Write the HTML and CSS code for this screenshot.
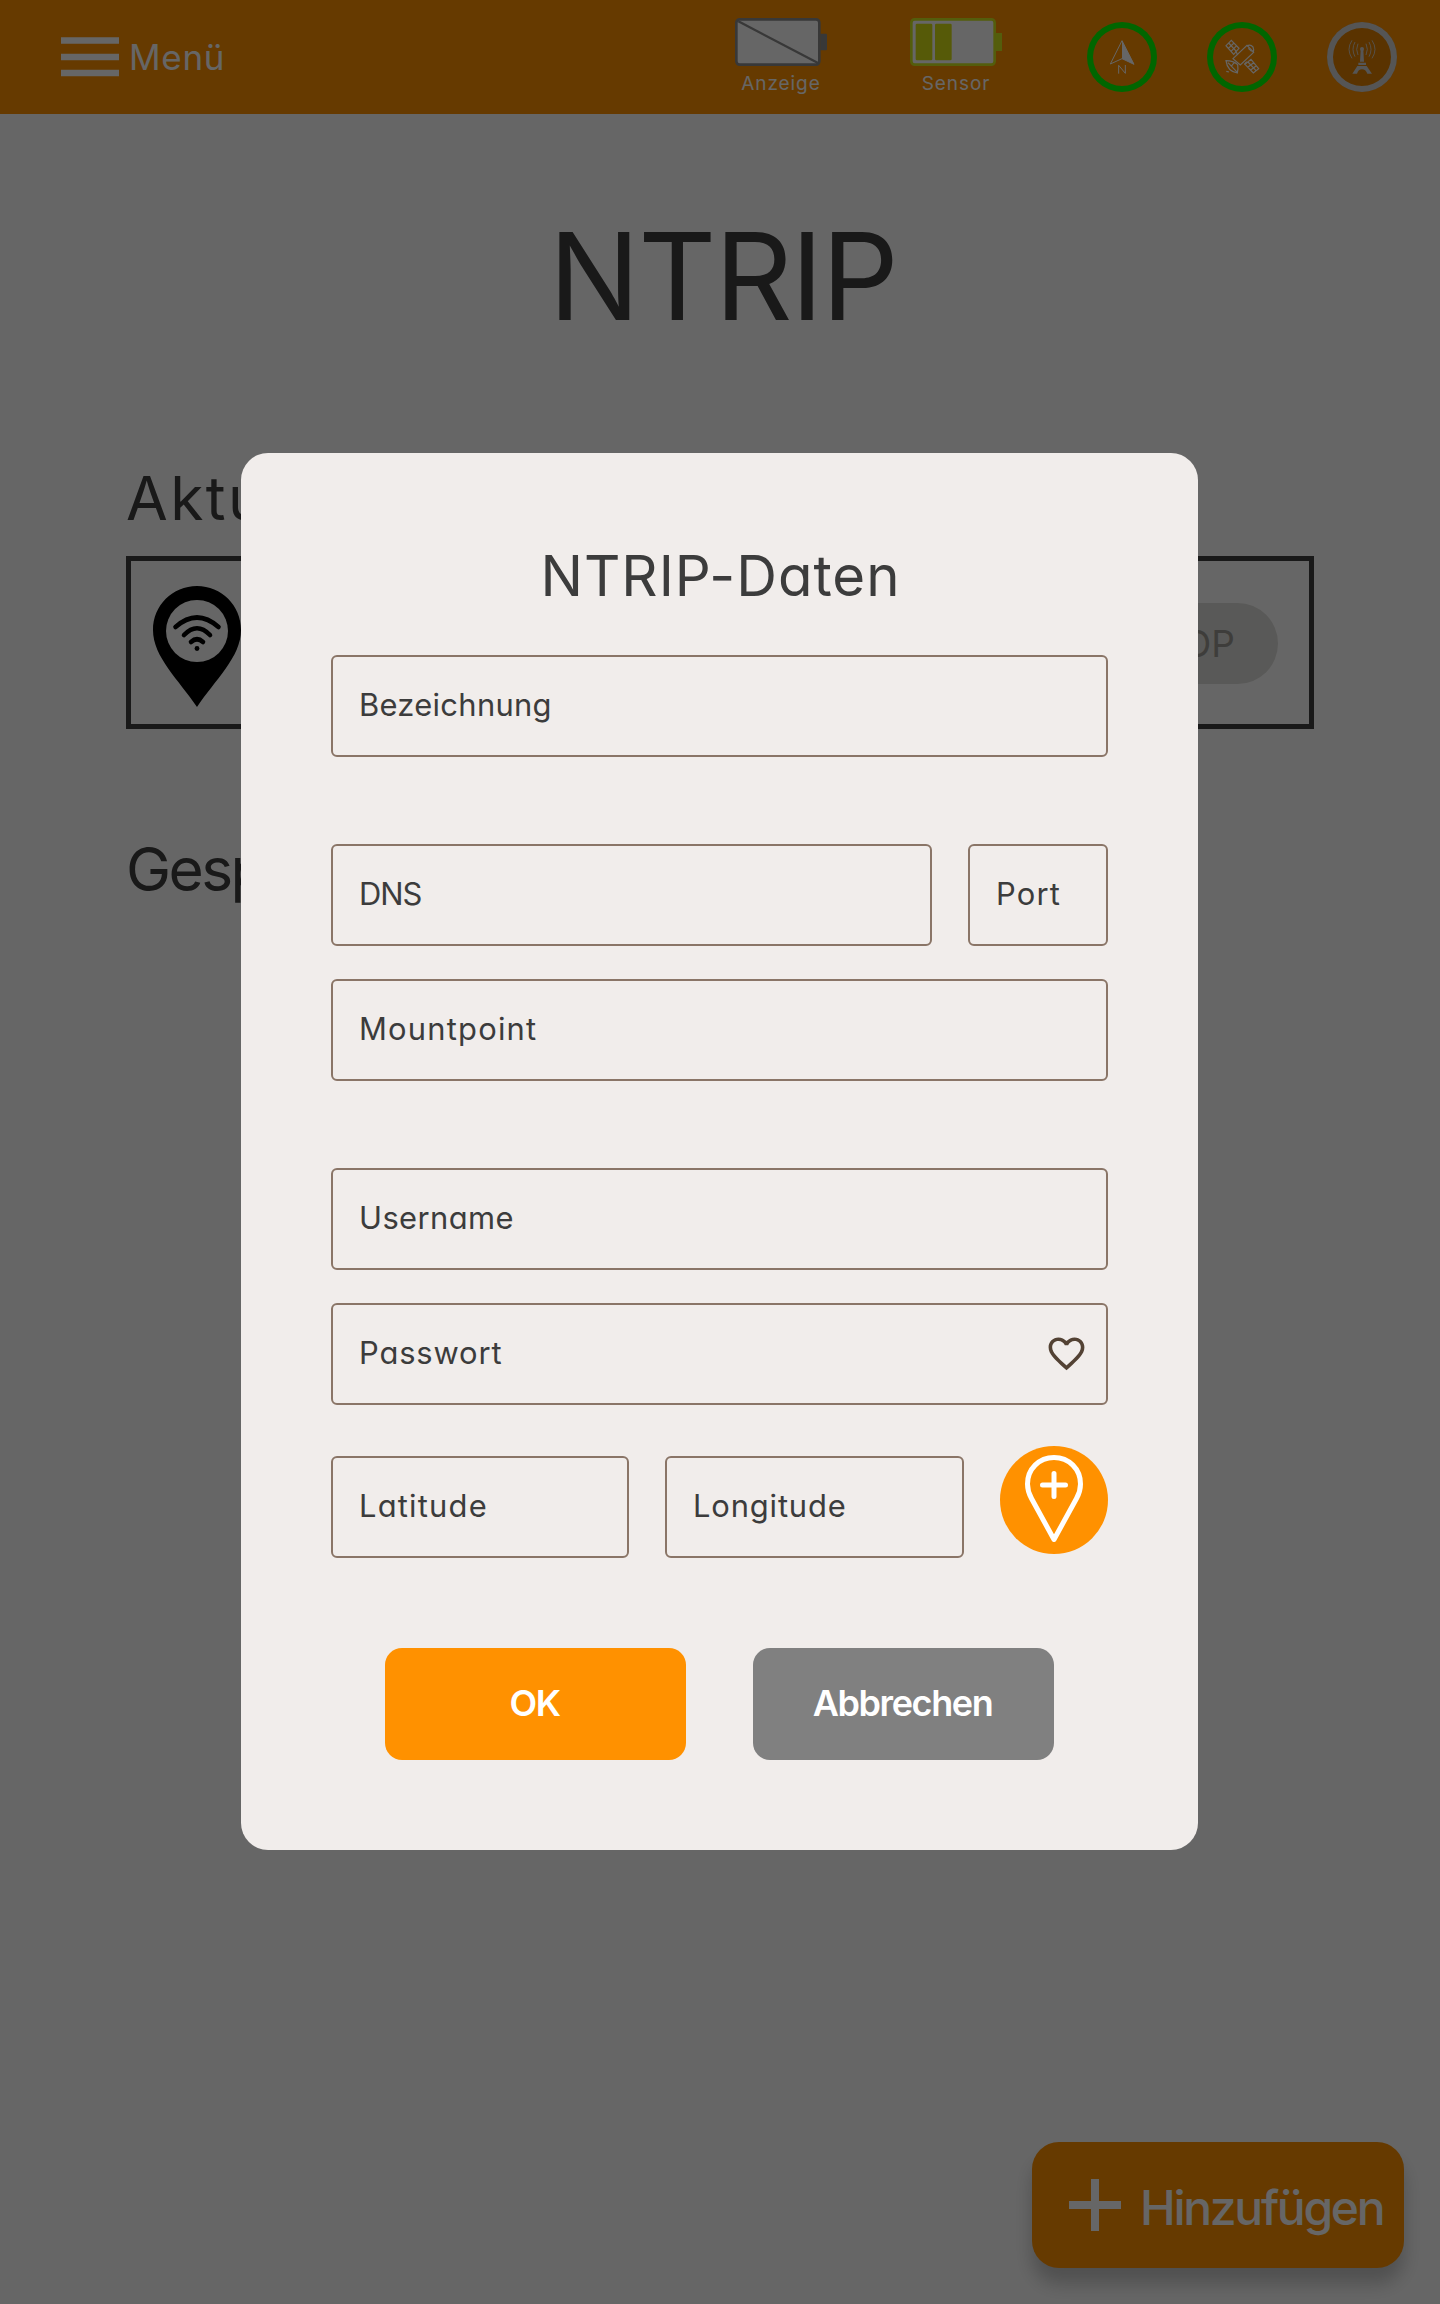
FILE: index.html
```html
<!DOCTYPE html>
<html lang="de">
<head>
<meta charset="utf-8">
<title>NTRIP</title>
<link rel="stylesheet" href="styles.css">
</head>
<body>
<header class="topbar">
  <div class="menu">
    <svg class="menu-icon" viewBox="0 0 58 40"><path d="M0 3.5H58M0 20H58M0 36H58" stroke="#fff" stroke-width="6.4"/></svg>
    <span class="menu-label">Menü</span>
  </div>
  <div class="status">
    <div class="battery">
      <svg class="battery-icon" viewBox="105 54 276 144">
        <rect x="109" y="58" width="249" height="136" rx="10" fill="#fff" stroke="#8c8c8c" stroke-width="8"/>
        <path d="M115 64L354 189" stroke="#8c8c8c" stroke-width="7"/>
        <path d="M361 101h17q3 0 3 3v44q0 3-3 3h-17z" fill="#8c8c8c"/>
      </svg>
      <span class="battery-label">Anzeige</span>
    </div>
    <div class="battery">
      <svg class="battery-icon" viewBox="630 54 276 144">
        <rect x="634" y="58" width="250" height="136" rx="10" fill="#fff" stroke="#d2e81e" stroke-width="8"/>
        <rect x="647" y="71" width="50" height="110" rx="4" fill="#d8e014"/>
        <rect x="705" y="71" width="50" height="110" rx="4" fill="#d8e014"/>
        <path d="M887 99h19v54h-19z" fill="#d2e81e"/>
      </svg>
      <span class="battery-label">Sensor</span>
    </div>
  </div>
  <div class="signals">
    <div class="ring ring-ok">
      <svg viewBox="81 66 210 210">
        <path d="M186 122L151 192L186 176L222 193Z" fill="none" stroke="#fff" stroke-width="3"/>
        <path d="M186 122V176L222 193Z" fill="#fff"/>
        <path d="M176 221V196L196 220V195" fill="none" stroke="#fff" stroke-width="3"/>
      </svg>
    </div>
    <div class="ring ring-ok">
      <svg viewBox="441 66 210 210" fill="none" stroke="#fff" stroke-width="3.6">
        <path d="M519 176L561 136L581 157L541 195Z"/>
        <path d="M561 138Q571 132 579 141Q583 150 579 157M565 145L575 154"/>
        <path d="M514 121L537 145L521 163L498 137ZM506 129L529 154M522 129L505 145M530 137L513 154"/>
        <path d="M527 152L533 165M560 185L553 193"/>
        <path d="M573 178L596 206L580 219L555 193ZM564 186L588 212M581 188L563 202M589 197L571 211"/>
        <path d="M498 182Q520 182 533 194Q535 205 532 219Q502 214 498 182ZM504 188L532 217M524 186L513 200M499 214L507 216"/>
      </svg>
    </div>
    <div class="ring ring-off">
      <svg viewBox="801 66 210 210" fill="none" stroke="#d4d4d4" stroke-width="2.6">
        <path d="M894 131Q886 148 894 165M885 126Q873 148 885 170M876 121Q858 148 876 175"/>
        <path d="M918 131Q926 148 918 165M927 126Q939 148 927 170M936 121Q954 148 936 175"/>
        <circle cx="906" cy="147" r="6" fill="#d4d4d4" stroke="none"/>
        <path d="M902 150H910L912 185H900ZM895 188H918V195H895ZM892 198H920L936 221H922Q917 208 906 208Q895 208 891 221H877Z" fill="#d4d4d4" stroke="none"/>
      </svg>
    </div>
  </div>
</header>

<main class="page">
  <h1 class="page-title">NTRIP</h1>
  <h2 class="section-title section-title-current">Aktuell</h2>
  <section class="connection">
    <svg class="connection-icon" viewBox="0 0 88 121">
      <path d="M44 0C68.500 0 88 19.500 88 44C88 71 62 94 44 121C26 94 0 71 0 44C0 19.500 19.500 0 44 0Z"/>
      <circle cx="44" cy="45" r="31" fill="#fff"/>
      <path d="M22.500 41Q44 22 65.500 41M31 49Q44 35.500 57 49M38 56Q44 50.500 50 56" fill="none" stroke="#000" stroke-width="4.600" stroke-linecap="round"/>
      <circle cx="44" cy="62.500" r="2.400"/>
    </svg>
    <span class="stop">STOP</span>
  </section>
  <h2 class="section-title section-title-saved">Gespeichert</h2>
</main>

<button class="add">
  <svg class="add-icon" viewBox="0 0 52 52"><path d="M26 0V52M0 26H52" stroke="#fff" stroke-width="8"/></svg>
  <span>Hinzufügen</span>
</button>

<div class="overlay">
  <form class="dialog">
    <h2 class="dialog-title">NTRIP-Daten</h2>
    <div class="field"><span class="w-name">Bezeichnung</span></div>
    <div class="row row-host">
      <div class="field"><span class="w-dns">DNS</span></div>
      <div class="field"><span class="w-port">Port</span></div>
    </div>
    <div class="field field-near"><span class="w-port">Mountpoint</span></div>
    <div class="field field-far"><span class="w-user">Username</span></div>
    <div class="field field-near">
      <span>Passwort</span>
      <svg class="heart" viewBox="0 0 24 24"><path fill="#534234" d="M16.500 3c-1.740 0-3.410.81-4.500 2.090C10.910 3.810 9.240 3 7.500 3 4.420 3 2 5.420 2 8.500c0 3.780 3.400 6.860 8.550 11.540L12 21.350l1.450-1.320C18.600 15.360 22 12.280 22 8.500 22 5.420 19.580 3 16.500 3zm-4.400 15.550l-.1.100-.1-.1C7.140 14.240 4 11.390 4 8.500 4 6.500 5.500 5 7.500 5c1.540 0 3.040.99 3.570 2.360h1.870C13.460 5.990 14.960 5 16.500 5c2 0 3.500 1.500 3.500 3.500 0 2.890-3.140 5.740-7.900 10.050z"/></svg>
    </div>
    <div class="row row-position">
      <div class="field"><span class="w-port">Latitude</span></div>
      <div class="field"><span>Longitude</span></div>
      <svg class="locate" viewBox="0 0 108 108">
        <circle cx="54" cy="54" r="54" fill="#ff9100"/>
        <path d="M54 93.500L31.500 52.500C29 48 27.500 44 27.500 38C27.500 23 39 11.500 54 11.500C69 11.500 80.500 23 80.500 38C80.500 44 79 48 76.500 52.500Z" fill="none" stroke="#fff" stroke-width="5" stroke-linejoin="round"/>
        <path d="M54 27.500V50.500M42.500 39H65.500" stroke="#fff" stroke-width="5" stroke-linecap="round"/>
      </svg>
    </div>
    <div class="actions">
      <button type="button" class="btn btn-ok">OK</button>
      <button type="button" class="btn btn-cancel">Abbrechen</button>
    </div>
  </form>
</div>
</body>
</html>
```
FILE: styles.css
```css
* { box-sizing: border-box; }

body {
  margin: 0;
  position: relative;
  height: 2304px;
  overflow: hidden;
  background: #fff;
  color: #404040;
  font-family: Inter, "Noto Sans", sans-serif;
  font-feature-settings: "cv11";
}

h1, h2 { margin: 0; font-weight: 400; }
svg { display: block; flex: none; }
button { border: 0; font: inherit; font-feature-settings: inherit; color: #fff; }

.topbar {
  display: flex;
  align-items: flex-start;
  height: 114px;
  padding: 0 43px 0 61px;
  background: #ff9100;
  color: #fff;
}
.menu { display: flex; align-items: center; gap: 10px; height: 114px; }
.menu-icon { width: 58px; height: 40px; }
.menu-label { font-size: 35px; letter-spacing: 0.7px; line-height: 44px; padding-bottom: 1px; }

.status { display: flex; gap: 83px; margin-left: auto; padding-top: 18px; }
.battery { display: flex; flex-direction: column; align-items: center; width: 92px; }
.battery-icon { width: 92px; height: 48px; }
.battery-label { margin-top: 6px; font-size: 19px; line-height: 24px; letter-spacing: 0.9px; }

.signals { display: flex; gap: 50px; margin: 22px 0 0 85px; }
.ring { width: 70px; height: 70px; border-radius: 50%; }
.ring svg { width: 70px; height: 70px; }
.ring-ok { box-shadow: inset 0 0 0 6px #00ff00; }
.ring-off { box-shadow: inset 0 0 0 6px #d4d4d4; background: #e08000; }

.page { padding: 102px 126px 0; }
.page-title { padding-left: 6px; font-size: 121px; line-height: 120px; letter-spacing: -1.7px; text-align: center; }
.section-title { font-size: 60.5px; line-height: 72px; }
.section-title-current { margin-top: 126px; letter-spacing: 2.4px; }
.section-title-saved { margin-top: 104px; letter-spacing: -2.6px; }

.connection {
  display: flex;
  align-items: center;
  justify-content: space-between;
  height: 173px;
  margin-top: 22px;
  padding: 4px 31px 2px 22px;
  border: 5px solid #404040;
}
.connection-icon { width: 88px; height: 121px; margin-top: 5px; }
.stop {
  padding: 0 43px;
  border-radius: 41px;
  background: #dfdfdb;
  color: #9c9a93;
  font-size: 37px;
  line-height: 81px;
}

.add {
  position: absolute;
  right: 36px;
  bottom: 36px;
  display: flex;
  align-items: center;
  gap: 19px;
  width: 372px;
  height: 126px;
  padding: 0 0 0 37px;
  border-radius: 27px;
  background: #ff9100;
  box-shadow: 0 16px 18px rgba(0, 0, 0, 0.22);
  font-size: 48px;
  font-weight: 500;
  letter-spacing: -2.3px;
}
.add-icon { width: 52px; height: 52px; }
.add span { padding-top: 5px; }

.overlay {
  position: absolute;
  inset: 0;
  display: flex;
  padding: 453px 242px 454px 241px;
  background: rgba(0, 0, 0, 0.6);
}
.dialog {
  flex: 1;
  padding: 88px 90px 0;
  border-radius: 27px;
  background: #f1edeb;
  color: #3c3c3c;
}
.dialog-title { margin-bottom: 44px; padding-left: 2px; font-size: 56.4px; line-height: 70px; letter-spacing: 1px; text-align: center; }

.field {
  display: flex;
  align-items: center;
  justify-content: space-between;
  height: 102px;
  padding: 0 18px 0 26px;
  border: 2px solid #8a7567;
  border-radius: 6px;
  font-size: 30.9px;
  letter-spacing: 0.85px;
}
.field span { padding-bottom: 4px; }
.field .w-name { letter-spacing: 0.3px; }
.field .w-dns { letter-spacing: -1px; }
.field .w-port { letter-spacing: 1.2px; }
.field .w-user { letter-spacing: 0.4px; }
.field-near { margin-top: 33px; }
.field-far { margin-top: 87px; }
.heart { width: 43px; height: 43px; margin-bottom: 1px; }

.row { display: grid; column-gap: 36px; }
.row-host { grid-template-columns: 601px 140px; margin-top: 87px; }
.row-position { grid-template-columns: 298px 299px 108px; margin-top: 41px; }
.row-position .field { margin-top: 10px; }
.locate { width: 108px; height: 108px; }

.actions { display: flex; justify-content: center; gap: 67px; margin-top: 90px; }
.btn { width: 301px; height: 112px; padding: 0 8px 2px 6px; border-radius: 17px; font-size: 36px; font-weight: 600; letter-spacing: -1.4px; }
.btn-ok { background: #ff9100; }
.btn-cancel { background: #808080; }
```
